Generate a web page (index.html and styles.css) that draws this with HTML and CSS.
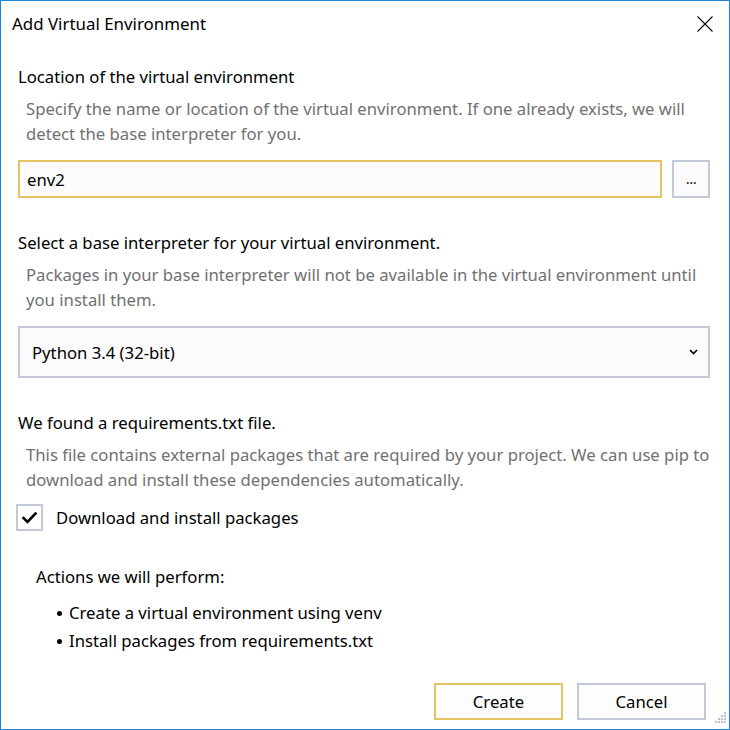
FILE: index.html
```html
<!DOCTYPE html>
<html lang="en">
<head>
<meta charset="utf-8">
<title>Add Virtual Environment</title>
<link rel="stylesheet" href="styles.css">
</head>
<body>
<div class="window">
  <div class="titlebar">
    <span class="title">Add Virtual Environment</span>
    <svg class="close" width="16" height="16" viewBox="0 0 16 16"><path d="M0.5 0.5 L15.5 15.5 M15.5 0.5 L0.5 15.5" stroke="#000" stroke-width="1.1" fill="none"/></svg>
  </div>
  <div class="content">
    <div class="heading first">Location of the virtual environment</div>
    <div class="desc">Specify the name or location of the virtual environment. If one already exists, we will detect the base interpreter for you.</div>
    <div class="path-row">
      <div class="input gold">env2</div>
      <div class="browse">...</div>
    </div>

    <div class="heading">Select a base interpreter for your virtual environment.</div>
    <div class="desc">Packages in your base interpreter will not be available in the virtual environment until you install them.</div>
    <div class="select">
      <span>Python 3.4 (32-bit)</span>
      <svg class="chev" width="9" height="6" viewBox="0 0 9 6"><path d="M1 1 L4.5 4.5 L8 1" stroke="#000" stroke-width="1.6" fill="none"/></svg>
    </div>

    <div class="heading">We found a requirements.txt file.</div>
    <div class="desc">This file contains external packages that are required by your project. We can use pip to download and install these dependencies automatically.</div>
    <div class="check-row">
      <div class="checkbox">
        <svg width="23" height="23" viewBox="0 0 23 23"><path d="M5.5 12 L9.5 16 L17.5 7.5" stroke="#000" stroke-width="2.6" fill="none" stroke-linecap="square"/></svg>
      </div>
      <span>Download and install packages</span>
    </div>

    <div class="actions">
      <div class="actions-title">Actions we will perform:</div>
      <ul class="list">
        <li><span class="dot"></span>Create a virtual environment using venv</li>
        <li><span class="dot"></span>Install packages from requirements.txt</li>
      </ul>
    </div>

    <div class="buttons">
      <div class="btn gold">Create</div>
      <div class="btn">Cancel</div>
    </div>
  </div>
  <svg class="grip" width="16" height="16" viewBox="0 0 16 16">
    <g fill="#b9c1d4">
      <rect x="12" y="0" width="2" height="2"/>
      <rect x="9" y="3" width="2" height="2"/><rect x="12" y="3" width="2" height="2"/>
      <rect x="6" y="6" width="2" height="2"/><rect x="9" y="6" width="2" height="2"/><rect x="12" y="6" width="2" height="2"/>
      <rect x="3" y="9" width="2" height="2"/><rect x="6" y="9" width="2" height="2"/><rect x="9" y="9" width="2" height="2"/><rect x="12" y="9" width="2" height="2"/>
    </g>
  </svg>
</div>
</body>
</html>
```

FILE: styles.css
```css
* { box-sizing: border-box; }
html, body { margin: 0; padding: 0; background: #fff; }
body {
  font-family: "Noto Sans", "Open Sans", sans-serif;
  font-size: 16.7px;
  color: #000;
}
.window {
  position: relative;
  width: 730px;
  height: 730px;
  border: 1px solid #1883d7;
  background: #fff;
  display: flex;
  flex-direction: column;
}
.titlebar {
  height: 46px;
  display: flex;
  align-items: center;
  justify-content: space-between;
  padding: 0 16px 0 11px;
  flex: none;
}
.title { font-size: 16.9px; line-height: 22px; }
.close { display: block; margin-top: 0; }
.content {
  flex: 1;
  display: flex;
  flex-direction: column;
  padding: 17px 19px 9px 17px;
}
.heading {
  line-height: 25px;
  margin-top: 32px;
}
.heading.first { margin-top: 0; }
.desc {
  color: #717171;
  line-height: 25px;
  margin-top: 7px;
  padding-left: 8px;
}
.path-row {
  display: flex;
  gap: 10px;
  margin-top: 14px;
  height: 38px;
}
.input {
  flex: 1;
  border: 2px solid #c3c9d9;
  background: #fbfbfb;
  padding-left: 7px;
  display: flex;
  align-items: center;
}
.gold { border-color: #e6c466 !important; }
.browse {
  width: 38px;
  border: 2px solid #c3c9d9;
  background: #fbfbfb;
  display: flex;
  align-items: center;
  justify-content: center;
  font-size: 15px;
  letter-spacing: -0.5px;
  color: #1a1a1a;
  padding-bottom: 2px;
}
.select {
  margin-top: 14px;
  height: 52px;
  border: 2px solid #c3c9d9;
  background: #fbfbfb;
  display: flex;
  align-items: center;
  justify-content: space-between;
  padding: 0 10px 0 12px;
}
.chev { display: block; }
.check-row {
  display: flex;
  align-items: center;
  gap: 13px;
  margin-top: 12px;
  margin-left: -2px;
}
.checkbox {
  width: 27px;
  height: 27px;
  border: 2px solid #c3c9d9;
  background: #fff;
  flex: none;
}
.checkbox svg { display: block; }
.actions {
  margin-top: 33px;
  padding-left: 18px;
}
.actions-title { line-height: 25px; }
.list {
  list-style: none;
  margin: 10px 0 0 0;
  padding: 0;
}
.list li {
  line-height: 28px;
  display: flex;
  align-items: center;
  padding-left: 21px;
}
.dot {
  width: 5px;
  height: 5px;
  border-radius: 50%;
  background: #000;
  margin-right: 7px;
  flex: none;
}
.buttons {
  margin-top: auto;
  display: flex;
  justify-content: flex-end;
  gap: 14px;
  padding-right: 4px;
}
.btn {
  width: 129px;
  height: 37px;
  border: 2px solid #c3c9d9;
  background: #fdfdfd;
  display: flex;
  align-items: center;
  justify-content: center;
  padding-bottom: 1px;
}
.grip {
  position: absolute;
  right: 1px;
  bottom: 1px;
}
```
